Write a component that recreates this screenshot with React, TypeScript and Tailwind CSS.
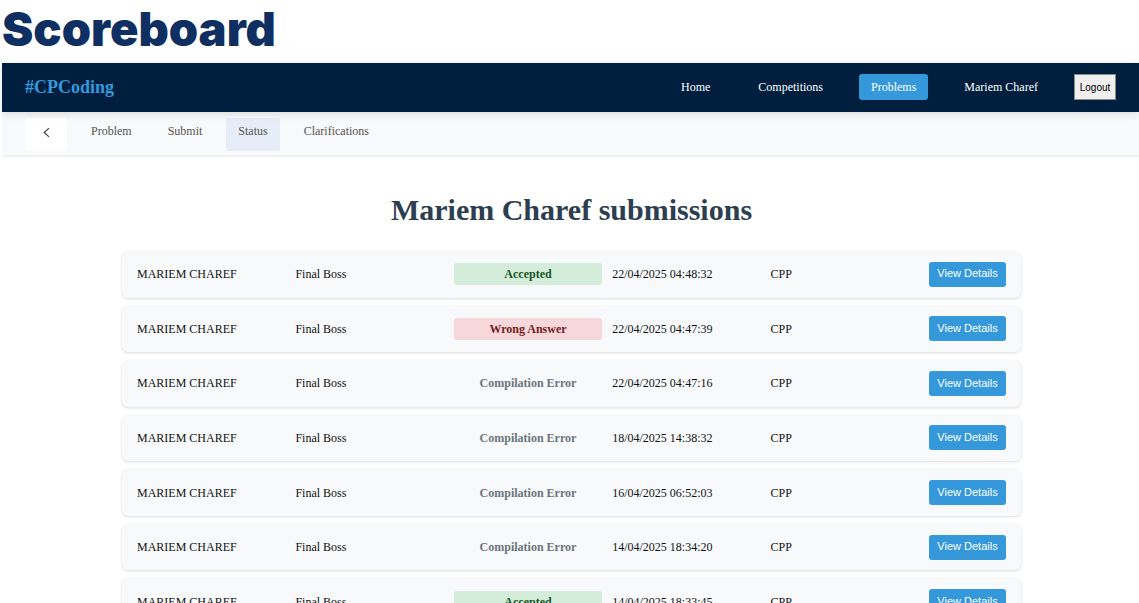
import React from "react";

type Verdict = "Accepted" | "Wrong Answer" | "Compilation Error";

interface Submission {
  verdict: Verdict;
  date: string;
}

const submissions: Submission[] = [
  { verdict: "Accepted", date: "22/04/2025 04:48:32" },
  { verdict: "Wrong Answer", date: "22/04/2025 04:47:39" },
  { verdict: "Compilation Error", date: "22/04/2025 04:47:16" },
  { verdict: "Compilation Error", date: "18/04/2025 14:38:32" },
  { verdict: "Compilation Error", date: "16/04/2025 06:52:03" },
  { verdict: "Compilation Error", date: "14/04/2025 18:34:20" },
  { verdict: "Accepted", date: "14/04/2025 18:33:45" },
];

const verdictStyles: Record<Verdict, string> = {
  Accepted: "bg-[#d4edda] text-[#155724]",
  "Wrong Answer": "bg-[#f8d7da] text-[#721c24]",
  "Compilation Error": "text-[#6c757d]",
};

const navItems = ["Home", "Competitions", "Problems", "Mariem Charef"];
const tabs = ["Problem", "Submit", "Status", "Clarifications"];

function NavBar() {
  return (
    <header className="relative flex h-[49px] items-center justify-between bg-[#001f3f] px-[23px] pb-px shadow-[0_2px_8px_rgba(0,0,0,0.12)]">
      <a href="#home" className="text-lg font-bold text-[#3498db]">
        #CPCoding
      </a>
      <nav className="flex items-center gap-6">
        {navItems.map((item) => (
          <a
            key={item}
            href="#nav"
            className={
              item === "Problems"
                ? "rounded-[3px] bg-[#3498db] px-3 py-1 text-xs leading-[18px] font-medium text-white"
                : "rounded-[3px] px-3 py-1 text-xs leading-[18px] font-medium text-white"
            }
          >
            {item}
          </a>
        ))}
        <button className="h-[26px] w-[42px] border border-[#8a8a8a] bg-[#efefef] text-center font-['Liberation_Sans',sans-serif] text-[10px] text-black">
          Logout
        </button>
      </nav>
    </header>
  );
}

function TabBar() {
  return (
    <nav className="flex items-start gap-3 border-b-2 border-[#f1f1f2] bg-[#f8f9fa] px-[23px] pt-[6px] pb-1">
      <button
        aria-label="Back"
        className="flex h-[33px] w-[42px] items-center justify-center rounded-[3px] bg-white pb-1 text-[#444]"
      >
        <svg viewBox="0 0 8 12" className="h-[11px] w-[7px]" fill="none" stroke="currentColor" strokeWidth="1.4">
          <path d="M6.8 1 1.4 6l5.4 5" />
        </svg>
      </button>
      {tabs.map((tab) => (
        <a
          key={tab}
          href="#tab"
          className={
            tab === "Status"
              ? "h-[33px] rounded-[2px] bg-[#e6edf8] px-3 pt-1 text-xs leading-[18px] text-[#555]"
              : "h-[33px] px-3 pt-1 text-xs leading-[18px] text-[#555]"
          }
        >
          {tab}
        </a>
      ))}
    </nav>
  );
}

function SubmissionTable() {
  return (
    <table className="mx-auto block max-w-[899px]">
      <tbody className="grid min-h-[374px] auto-rows-fr gap-2">
        {submissions.map((s) => (
          <tr
            key={s.date}
            className="grid grid-cols-[repeat(5,minmax(0,1fr))_auto] items-center gap-[10px] rounded-md bg-[#f8f9fa] px-[15px] text-xs text-[#111] shadow-[0_1px_3px_rgba(0,0,0,0.14)]"
          >
            <td>MARIEM CHAREF</td>
            <td>Final Boss</td>
            <td>
              <span className={`block rounded-[3px] text-center leading-[22px] font-bold ${verdictStyles[s.verdict]}`}>
                {s.verdict}
              </span>
            </td>
            <td>{s.date}</td>
            <td>CPP</td>
            <td className="flex">
              <button className="h-[25px] w-[77px] rounded-[3px] bg-[#3498db] pb-px font-['Liberation_Sans',sans-serif] text-[11px] text-white">
                View Details
              </button>
            </td>
          </tr>
        ))}
      </tbody>
    </table>
  );
}

export default function App() {
  return (
    <div className="min-h-screen bg-white font-['Liberation_Serif',serif]">
      <h1 className="pt-px pb-[6px] pl-[2px] font-['Inter',sans-serif] text-[47px] leading-[56px] font-black text-[#0f2f62]">
        Scoreboard
      </h1>
      <div className="ml-[2px]">
        <NavBar />
        <TabBar />
        <main className="pt-[35px] pr-6 pl-[26px]">
          <h2 className="mb-[23px] text-center text-3xl leading-[36px] font-bold text-[#2c3e50]">
            Mariem Charef submissions
          </h2>
          <SubmissionTable />
        </main>
      </div>
    </div>
  );
}
